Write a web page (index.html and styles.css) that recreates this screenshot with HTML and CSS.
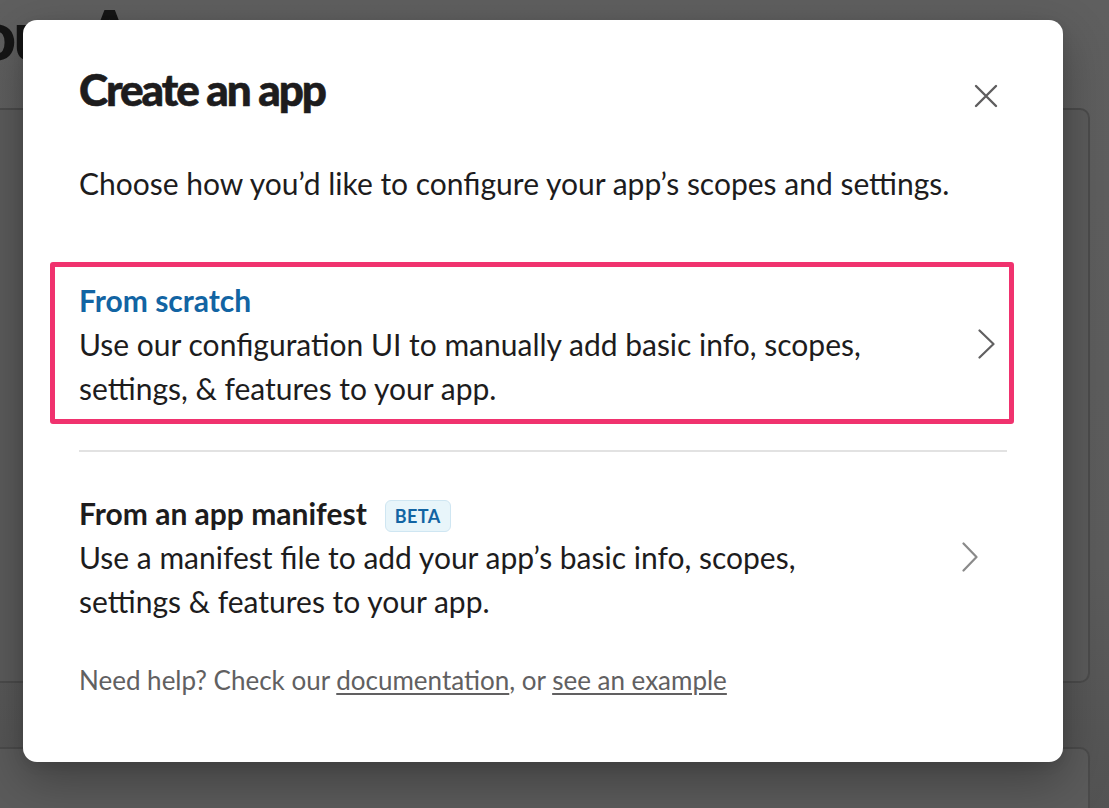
FILE: index.html
```html
<!DOCTYPE html>
<html lang="en">
<head>
<meta charset="utf-8">
<title>Create an app</title>
<link rel="stylesheet" href="styles.css">
</head>
<body>
<div class="page">
  <h1 class="page-title">Your Apps</h1>
  <div class="card card-main"></div>
  <div class="card card-next"></div>
</div>

<div class="modal" role="dialog" aria-labelledby="modal-title">
  <div class="modal-header">
    <h2 class="modal-title" id="modal-title">Create an app</h2>
    <button class="close-btn" aria-label="Close">
      <svg width="24" height="24" viewBox="0 0 24 24"><path d="M2 2 L22 22 M22 2 L2 22" stroke="#5e5d5e" stroke-width="2.4" stroke-linecap="round" fill="none"/></svg>
    </button>
  </div>
  <p class="modal-intro">Choose how you’d like to configure your app’s scopes and settings.</p>

  <div class="option option-selected">
    <div class="option-text">
      <div class="option-head"><span class="option-title option-title-blue">From scratch</span></div>
      <div class="option-desc">Use our configuration UI to manually add basic info, scopes, settings, &amp; features to your app.</div>
    </div>
    <svg class="chevron" width="17" height="30" viewBox="0 0 17 30"><polyline points="1.5,1.5 15.5,15 1.5,28.5" fill="none" stroke="#616061" stroke-width="2.2" stroke-linecap="round" stroke-linejoin="round"/></svg>
  </div>

  <div class="divider"></div>

  <div class="option option-plain">
    <div class="option-text">
      <div class="option-head"><span class="option-title">From an app manifest</span><span class="badge">BETA</span></div>
      <div class="option-desc">Use a manifest file to add your app’s basic info, scopes, settings &amp; features to your app.</div>
    </div>
    <svg class="chevron" width="16" height="30" viewBox="0 0 16 30"><polyline points="1.5,1.5 14.5,15 1.5,28.5" fill="none" stroke="#8a8a8a" stroke-width="2.2" stroke-linecap="round" stroke-linejoin="round"/></svg>
  </div>

  <p class="modal-footer">Need help? Check our <a href="#">documentation</a>, or <a href="#">see an example</a></p>
</div>
</body>
</html>
```

FILE: styles.css
```css
html, body {
  margin: 0;
  padding: 0;
}

body {
  width: 1109px;
  height: 808px;
  overflow: hidden;
  background: linear-gradient(180deg, #5f5f5f 0%, #5c5c5c 70%, #535353 100%);
  font-family: Lato, "Noto Sans", "Liberation Sans", sans-serif;
  color: #1d1c1d;
  position: relative;
}

/* background page (dimmed) */
.page {
  height: 808px;
  overflow: hidden;
  display: flex;
  flex-direction: column;
}

.page-title {
  flex: none;
  margin: 0 0 0 -57px;
  font-size: 68px;
  line-height: 68px;
  font-weight: 900;
  color: #151515;
  height: 108px;
  letter-spacing: -3px;
  word-spacing: 5px;
  white-space: nowrap;
}

.card {
  flex: none;
  margin-left: -20px;
  width: 1110px;
  box-sizing: border-box;
  border: 2px solid #4b4b4b;
  border-radius: 10px;
  background: #5b5b5b;
}

.card-main {
  height: 575px;
}

.card-next {
  margin-top: 64px;
  height: 90px;
}

/* modal */
.modal {
  position: absolute;
  top: 20px;
  left: 23px;
  width: 1040px;
  height: 742px;
  box-sizing: border-box;
  padding: 0 56px;
  background: #ffffff;
  border-radius: 14px;
  box-shadow: 0 4px 12px rgba(0, 0, 0, 0.08), 0 18px 48px rgba(0, 0, 0, 0.3);
}

.modal-header {
  display: flex;
  justify-content: space-between;
  align-items: flex-start;
  padding-top: 43px;
}

.modal-title {
  margin: 0;
  font-size: 44px;
  line-height: 52px;
  font-weight: 900;
  letter-spacing: -2px;
  -webkit-text-stroke: 0.6px #1d1c1d;
  color: #1d1c1d;
}

.close-btn {
  margin-top: 12px;
  width: 42px;
  height: 42px;
  padding: 0;
  border: 0;
  background: transparent;
  display: flex;
  align-items: center;
  justify-content: center;
}

.modal-intro {
  margin: 44px 0 0;
  font-size: 30px;
  line-height: 44px;
  color: #1d1c1d;
}

.option {
  display: flex;
  align-items: center;
  justify-content: space-between;
}

.option-selected {
  margin: 57px -7px 0 -29px;
  padding: 11px 14px 9px 24px;
  border: 5px solid #f0326e;
  border-radius: 3px;
}

.option-plain {
  margin-top: 39px;
  padding-right: 29px;
}

.option-text {
  max-width: 800px;
}

.option-head {
  display: flex;
  align-items: center;
  gap: 18px;
}

.option-title {
  font-size: 30px;
  line-height: 44px;
  font-weight: 700;
  color: #1d1c1d;
}

.option-title-blue {
  color: #1264a3;
}

.badge {
  margin-top: 6px;
  height: 32px;
  box-sizing: border-box;
  padding: 0 9px;
  display: inline-flex;
  align-items: center;
  font-size: 18px;
  font-weight: 700;
  letter-spacing: 0.4px;
  color: #1264a3;
  background: #e8f5fa;
  border: 1px solid #cfe6f2;
  border-radius: 6px;
}

.option-desc {
  font-size: 30px;
  line-height: 44px;
  color: #1d1c1d;
}

.chevron {
  flex: none;
}

.divider {
  margin-top: 26px;
  height: 2px;
  background: #e2e2e2;
}

.modal-footer {
  margin: 38px 0 0;
  font-size: 26px;
  line-height: 38px;
  color: #616061;
}

.modal-footer a {
  color: #616061;
  text-decoration: underline;
  text-underline-offset: 3px;
}
```
